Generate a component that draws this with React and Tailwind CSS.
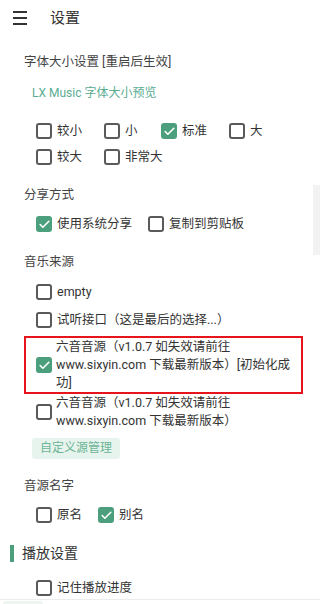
import { Check } from "lucide-react";

function Box({ checked }) {
  return checked ? (
    <span className="flex h-[16px] w-[16px] shrink-0 items-center justify-center rounded-[3px] bg-[#4c9f7c]">
      <Check className="h-[13px] w-[13px] text-white" strokeWidth={3} />
    </span>
  ) : (
    <span className="h-[16px] w-[16px] shrink-0 rounded-[3px] border-2 border-[#5a5a5a]" />
  );
}

function Opt({ label, checked, className = "" }) {
  return (
    <div className={`flex h-[26px] items-center gap-[5px] ${className}`}>
      <Box checked={checked} />
      <span className="text-[12.5px] text-[#333]">{label}</span>
    </div>
  );
}

function Title({ children, className = "" }) {
  return <div className={`px-[24px] text-[12.5px] leading-[18px] text-[#444] ${className}`}>{children}</div>;
}

export default function App() {
  return (
    <div
      className="relative h-[604px] w-[320px] overflow-hidden bg-white"
      style={{ fontFamily: 'Roboto, "Noto Sans CJK SC", sans-serif' }}
    >
      {/* header */}
      <div className="flex h-[36px] items-center px-[13px]">
        <div className="flex w-[14px] flex-col gap-[4px]">
          <span className="h-[2px] bg-[#333]" />
          <span className="h-[2px] bg-[#333]" />
          <span className="h-[2px] bg-[#333]" />
        </div>
        <span className="ml-[23px] text-[15px] text-[#333]">设置</span>
      </div>

      <Title className="mt-[17px]">字体大小设置 [重启后生效]</Title>
      <div className="ml-[26px] mt-[12px] w-fit px-[6px] py-[1px] text-[12px] leading-[18px] text-[#5aac92]">
        LX Music 字体大小预览
      </div>

      <div className="mt-[15px] pl-[36px]">
        <div className="flex">
          <Opt label="较小" className="w-[68px]" />
          <Opt label="小" className="w-[57px]" />
          <Opt label="标准" checked className="w-[68px]" />
          <Opt label="大" />
        </div>
        <div className="flex">
          <Opt label="较大" className="w-[68px]" />
          <Opt label="非常大" />
        </div>
      </div>

      <Title className="mt-[16px]">分享方式</Title>
      <div className="mt-[7px] flex pl-[36px]">
        <Opt label="使用系统分享" checked className="w-[112px]" />
        <Opt label="复制到剪贴板" />
      </div>

      <Title className="mt-[16px]">音乐来源</Title>
      <div className="mt-[7px] pl-[24px]">
        <Opt label="empty" className="h-[28px] pl-[12px]" />
        <Opt label="试听接口（这是最后的选择...）" className="h-[28px] pl-[12px]" />
        <div className="mt-[2px] flex w-[279px] items-center gap-[4px] border-2 border-[#e8141c] pl-[10px] pr-[4px]">
          <Box checked />
          <span className="text-[12.5px] leading-[18px] text-[#333]">
            六音音源（v1.0.7 如失效请前往 www.sixyin.com 下载最新版本）[初始化成功]
          </span>
        </div>
        <div className="flex w-[279px] items-center gap-[4px] pl-[12px] pr-[6px]">
          <Box />
          <span className="text-[12.5px] leading-[18px] text-[#333]">
            六音音源（v1.0.7 如失效请前往 www.sixyin.com 下载最新版本）
          </span>
        </div>
        <div className="ml-[8px] mt-[8px] w-fit rounded-[3px] bg-[#e7f4ed] px-[8px] text-[12px] leading-[21px] text-[#6cb597]">
          自定义源管理
        </div>
      </div>

      <Title className="mt-[18px]">音源名字</Title>
      <div className="mt-[7px] flex pl-[36px]">
        <Opt label="原名" className="w-[62px]" />
        <Opt label="别名" checked />
      </div>

      <div className="mt-[16px] flex items-center gap-[8px] pl-[10px]">
        <span className="h-[17px] w-[4px] bg-[#4c9f7c]" />
        <span className="text-[14px] leading-[18px] text-[#333]">播放设置</span>
      </div>
      <div className="mt-[13px] pl-[36px]">
        <Opt label="记住播放进度" />
      </div>

      {/* scrollbar track */}
      <div className="absolute right-0 top-[185px] h-[70px] w-[7px] bg-[#f2f2f2]" />
      {/* bottom strip */}
      <div className="absolute bottom-0 left-0 h-[5px] w-full border-t border-[#ececec] bg-white">
        <div className="ml-[3px] mt-[1px] h-[4px] w-[40px] rounded-t-[3px] bg-[#eef6f2]" />
      </div>
    </div>
  );
}
